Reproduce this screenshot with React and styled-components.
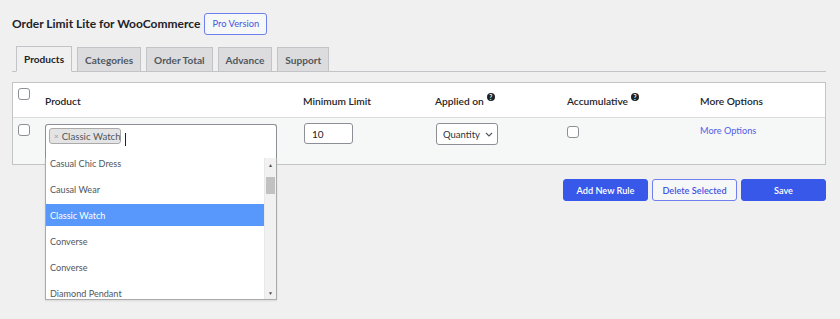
import styled, { createGlobalStyle } from "styled-components";

const GlobalStyle = createGlobalStyle`
  html, body {
    margin: 0;
    background: #f0f0f1;
    font-family: Lato, "Open Sans", sans-serif;
    color: #1d2327;
  }
  * { box-sizing: border-box; }
`

const Page = styled.div`
  width: 840px;
  height: 319px;
  padding: 12px 14px 0 12px;
  overflow: hidden;
`
const Heading = styled.div`
  display: flex;
  align-items: center;
  gap: 4px;
  height: 23px;
`
const Title = styled.h1`
  margin: 0;
  font-size: 12px;
  font-weight: 700;
`
const ProButton = styled.button`
  width: 63px;
  height: 22px;
  padding: 0;
  font-family: inherit;
  font-size: 9.3px;
  color: #4356e0;
  background: #f6f7f7;
  border: 1px solid #6f7fee;
  border-radius: 3px;
  white-space: nowrap;
`
const TabBar = styled.div`
  display: flex;
  gap: 5px;
  margin-top: 12px;
  padding-left: 4px;
  border-bottom: 1px solid #c3c4c7;
  height: 25px;
`
const Tab = styled.div`
  padding: 0 7px;
  display: flex;
  align-items: center;
  font-size: 10.1px;
  font-weight: 700;
  color: ${p => (p.$active ? "#1d2327" : "#50575e")};
  background: ${p => (p.$active ? "#f0f0f1" : "#dcdcde")};
  border: 1px solid #c3c4c7;
  border-bottom: ${p => (p.$active ? "1px solid #f0f0f1" : "none")};
  margin-bottom: ${p => (p.$active ? "-1px" : "0")};
  height: ${p => (p.$active ? "26px" : "24px")};
  align-self: flex-end;
`
const Table = styled.div`
  margin-top: 10px;
  border: 1px solid #c3c4c7;
  background: #fff;
  position: relative;
`
const Row = styled.div`
  display: grid;
  grid-template-columns: 32px 258px 132px 132px 133px 1fr;
  height: ${p => (p.$head ? "34px" : "47px")};
  background: ${p => (p.$head ? "#fff" : "#f6f7f7")};
  border-top: ${p => (p.$head ? "none" : "1px solid #dcdcde")};
`
const Cell = styled.div`
  display: flex;
  align-items: ${p => (p.$head ? "center" : "flex-start")};
  padding-top: ${p => (p.$head ? "2px" : "6px")};
  gap: 3px;
  font-size: 10.2px;
  font-weight: ${p => (p.$head ? 600 : 400)};
  color: #1d2327;
`
const Check = styled.span`
  display: inline-block;
  width: 12px;
  height: 12px;
  border: 1px solid #8c8f94;
  border-radius: 3px;
  background: #fff;
  margin-left: ${p => (p.$flush ? 0 : 5)}px;
  margin-top: ${p => p.$mt || 0}px;
  align-self: flex-start;
`
const Help = styled.span`
  display: inline-flex;
  align-items: center;
  justify-content: center;
  width: 8px;
  height: 8px;
  border-radius: 50%;
  background: #1d2327;
  color: #fff;
  font-size: 6.5px;
  font-weight: 700;
  align-self: flex-start;
  margin-top: 8px;
`
const SelectBox = styled.div`
  width: 232px;
  height: 35px;
  border: 1px solid #8c8f94;
  border-bottom-color: #50575e;
  border-radius: 3px 3px 0 0;
  background: #fff;
  display: flex;
  align-items: flex-start;
  padding: 3px 3px;
  gap: 4px;
`
const TagChip = styled.span`
  display: inline-flex;
  align-items: center;
  gap: 3px;
  height: 16px;
  width: 72px;
  padding: 0 4px;
  background: #e4e4e4;
  border: 1px solid #aaa;
  border-radius: 3px;
  font-size: 9.7px;
  color: #50575e;
  white-space: nowrap;
`
const Remove = styled.span`
  font-size: 8px;
  color: #999;
`
const Caret = styled.span`
  width: 1px;
  height: 13px;
  background: #1d2327;
  margin-top: 5px;
`
const NumInput = styled.div`
  width: 49px;
  height: 21px;
  margin-left: 1px;
  margin-top: -1px;
  border: 1px solid #8c8f94;
  border-radius: 3px;
  background: #fff;
  font-size: 10px;
  padding: 4px 7px;
`
const Dropdown = styled.div`
  width: 62px;
  height: 22px;
  margin-left: 1px;
  margin-top: -1px;
  padding: 0 0 0 6px;
  display: flex;
  align-items: center;
  gap: 5px;
  border: 1px solid #8c8f94;
  border-radius: 3px;
  background: #fff;
  color: #2c3338;
  font-size: 9.5px;
`
const LinkText = styled.span`
  color: #4e61e5;
  font-size: 9.2px;
  margin-top: 1px;
`
const Menu = styled.div`
  position: absolute;
  left: 32px;
  top: 75px;
  width: 232px;
  height: 142px;
  display: flex;
  background: #fff;
  border: 1px solid #aaa;
  border-top: none;
  box-shadow: 0 1px 2px rgba(0, 0, 0, 0.1);
  z-index: 5;
  overflow: hidden;
`
const Options = styled.ul`
  list-style: none;
  margin: -6px 0 0;
  padding: 0;
  flex: 1;
`
const Option = styled.li`
  height: 22px;
  margin-bottom: 4px;
  padding: 0 4px;
  display: flex;
  align-items: center;
  font-size: 9.1px;
  color: ${p => (p.$hl ? "#fff" : "#50575e")};
  background: ${p => (p.$hl ? "#5897fb" : "transparent")};
`
const Scrollbar = styled.div`
  width: 12px;
  background: #f1f1f1;
  border-left: 1px solid #e8e8e8;
  display: flex;
  flex-direction: column;
  align-items: center;
  padding: 3px 0 2px;
`
const Arrow = styled.span`
  font-size: 5px;
  color: #505050;
  line-height: 8px;
`
const Thumb = styled.div`
  width: 9px;
  height: 17px;
  background: #c1c1c1;
  margin-top: 8px;
  flex: none;
`
const Spacer = styled.div`
  flex: 1;
`
const Actions = styled.div`
  display: flex;
  justify-content: flex-end;
  gap: 4px;
  margin-top: 14px;
`
const ActionButton = styled.button`
  width: 85px;
  height: 22px;
  padding: 0;
  font-family: inherit;
  font-size: 9.2px;
  font-weight: 600;
  white-space: nowrap;
  border-radius: 3px;
  border: 1px solid ${p => (p.$outline ? "#6f7fee" : "#3858e9")};
  background: ${p => (p.$outline ? "#f6f7f7" : "#3858e9")};
  color: ${p => (p.$outline ? "#4356e0" : "#fff")};
`

const options = [
  "Casual Chic Dress",
  "Causal Wear",
  "Classic Watch",
  "Converse",
  "Converse",
  "Diamond Pendant",
]

export default function App() {
  return (
    <>
      <GlobalStyle />
      <Page>
        <Heading>
          <Title>Order Limit Lite for WooCommerce</Title>
          <ProButton>Pro Version</ProButton>
        </Heading>
        <TabBar>
          <Tab $active>Products</Tab>
          <Tab>Categories</Tab>
          <Tab>Order Total</Tab>
          <Tab>Advance</Tab>
          <Tab>Support</Tab>
        </TabBar>
        <Table>
          <Row $head>
            <Cell><Check $mt={-1} /></Cell>
            <Cell $head>Product</Cell>
            <Cell $head>Minimum Limit</Cell>
            <Cell $head>Applied on <Help>?</Help></Cell>
            <Cell $head>Accumulative <Help>?</Help></Cell>
            <Cell $head>More Options</Cell>
          </Row>
          <Row>
            <Cell><Check /></Cell>
            <Cell>
              <SelectBox>
                <TagChip><Remove>×</Remove>Classic Watch</TagChip>
                <Caret />
              </SelectBox>
            </Cell>
            <Cell><NumInput>10</NumInput></Cell>
            <Cell>
              <Dropdown>
                Quantity
                <svg width="8" height="5" viewBox="0 0 8 5">
                  <path d="M1 1l3 3 3-3" fill="none" stroke="#50575e" strokeWidth="1.1" />
                </svg>
              </Dropdown>
            </Cell>
            <Cell><Check $mt={2} $flush /></Cell>
            <Cell><LinkText>More Options</LinkText></Cell>
          </Row>
          <Menu>
            <Options>
              {options.map((o, i) => (
                <Option key={i} $hl={o === "Classic Watch"}>{o}</Option>
              ))}
            </Options>
            <Scrollbar>
              <Arrow>▲</Arrow>
              <Thumb />
              <Spacer />
              <Arrow>▼</Arrow>
            </Scrollbar>
          </Menu>
        </Table>
        <Actions>
          <ActionButton>Add New Rule</ActionButton>
          <ActionButton $outline>Delete Selected</ActionButton>
          <ActionButton>Save</ActionButton>
        </Actions>
      </Page>
    </>
  )
}
